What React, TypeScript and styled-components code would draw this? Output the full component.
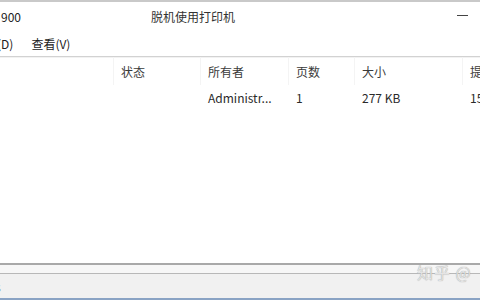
import React from "react";
import styled, { createGlobalStyle } from "styled-components";

const Global = createGlobalStyle`
  html, body { margin: 0; padding: 0; background: #fff; }
  body { font-family: "Noto Sans CJK SC", "Noto Sans", sans-serif; color: #2b2b2b; }
`;

const Window = styled.div`
  position: relative;
  width: 480px;
  height: 300px;
  overflow: hidden;
  display: flex;
  flex-direction: column;
  background: #fff;
  border-top: 2px solid #c9c9c9;
  box-sizing: border-box;
  font-size: 12px;
`;

const TitleBar = styled.div`
  height: 28px;
  display: flex;
  align-items: center;
  flex-shrink: 0;
`;

const TitleLeft = styled.div`
  width: 150px;
  padding-left: 1px;
  color: #222;
`;

const TitleCenter = styled.div`
  flex: 1;
  color: #333;
`;

const Minimize = styled.div`
  width: 11px;
  height: 1px;
  background: #444;
  margin-right: 12px;
  margin-top: -2px;
`;

const MenuBar = styled.div`
  height: 26px;
  display: flex;
  align-items: center;
  gap: 18px;
  flex-shrink: 0;
  border-bottom: 1px solid #d2d2d2;
  box-shadow: 0 1px 0 #f2f2f2;
`;

const MenuItem = styled.span<{ $shift?: number }>`
  color: #222;
  margin-left: ${(p) => p.$shift ?? 0}px;
`;

const List = styled.div`
  flex: 1;
  display: flex;
  flex-direction: column;
  padding-top: 0;
`;

const Row = styled.div<{ $h: number }>`
  display: grid;
  grid-template-columns: 113px 87px 88px 66px 108px 1fr;
  height: ${(p) => p.$h}px;
  align-items: center;
`;

const HeaderCell = styled.div<{ $sep?: boolean }>`
  height: 100%;
  display: flex;
  align-items: center;
  padding-left: 7px;
  color: #3a3a3a;
  border-left: ${(p) => (p.$sep ? "1px solid #f4f4f4" : "none")};
  white-space: nowrap;
  overflow: hidden;
`;

const Cell = styled.div`
  padding-left: 8px;
  color: #2a2a2a;
  white-space: nowrap;
  overflow: hidden;
`;

const Spacer = styled.div`
  flex: 1;
`;

const BottomRule = styled.div`
  height: 11px;
  border-top: 2px solid #a9a9a9;
  border-bottom: 1px solid #b8b8b8;
  background: #f7f7f7;
  box-sizing: border-box;
  flex-shrink: 0;
`;

const StatusBar = styled.div`
  height: 26px;
  display: flex;
  align-items: center;
  background: #f1f1f1;
  border-bottom: 2px solid #8aa3c4;
  box-sizing: border-box;
  flex-shrink: 0;
`;

const StatusText = styled.span`
  margin-left: -5px;
  color: #444;
`;

const Watermark = styled.div`
  position: absolute;
  left: 417px;
  top: 258px;
  font-size: 16px;
  color: #e4e4e4;
  text-shadow: 0 0 1px #8f8f8f;
  letter-spacing: 1px;
  white-space: nowrap;
`;

export default function App() {
  return (
    <>
      <Global />
      <Window>
        <TitleBar>
          <TitleLeft>900</TitleLeft>
          <TitleCenter>脱机使用打印机</TitleCenter>
          <Minimize />
        </TitleBar>
        <MenuBar>
          <MenuItem $shift={-3}>(D)</MenuItem>
          <MenuItem>查看(V)</MenuItem>
        </MenuBar>
        <List>
          <Row $h={28}>
            <HeaderCell />
            <HeaderCell $sep>状态</HeaderCell>
            <HeaderCell $sep>所有者</HeaderCell>
            <HeaderCell $sep>页数</HeaderCell>
            <HeaderCell $sep>大小</HeaderCell>
            <HeaderCell $sep>提交时间</HeaderCell>
          </Row>
          <Row $h={24}>
            <Cell />
            <Cell />
            <Cell>Administr...</Cell>
            <Cell>1</Cell>
            <Cell>277 KB</Cell>
            <Cell>15:02</Cell>
          </Row>
          <Spacer />
        </List>
        <BottomRule />
        <StatusBar>
          <StatusText>s</StatusText>
        </StatusBar>
        <Watermark>知乎 @</Watermark>
      </Window>
    </>
  );
}
